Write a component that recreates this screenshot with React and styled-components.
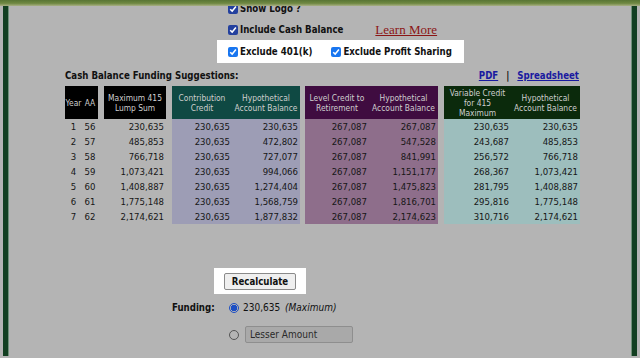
import React from 'react';
import styled, { createGlobalStyle } from 'styled-components';

const GlobalStyle = createGlobalStyle`
  html, body {
    margin: 0;
    padding: 0;
    background: #b4b4b4;
    overflow: hidden;
  }
  body {
    font-family: "DejaVu Sans Condensed", "DejaVu Sans", sans-serif;
    color: #111;
  }
`;

const TopStrip = styled.div`
  position: fixed;
  top: 0;
  left: 0;
  right: 0;
  height: 6px;
  background: linear-gradient(#587534, #6f8842 55%, #a9b085);
  z-index: 2;
`;

const Frame = styled.div`
  margin-left: 3px;
  width: 624px;
  height: 358px;
  border-left: 5px solid #123f21;
  border-right: 5px solid #123f21;
  box-shadow: inset 1px 0 0 #6f8f78, inset -1px 0 0 #6f8f78;
`;

const Content = styled.div`
  margin-top: -2px;
  padding-left: 57px;
  width: 516px;
`;

const OptionRow = styled.div`
  display: flex;
  align-items: center;
  height: 21px;
  margin-left: 163px;
`;

const Spotlight = styled.div`
  display: flex;
  align-items: center;
  gap: 19px;
  background: #fff;
  height: 23px;
  width: 247px;
  box-sizing: border-box;
  padding-left: 11px;
  margin-left: 152px;
`;

const Check = styled.label`
  display: flex;
  align-items: center;
  gap: 2px;
  font-size: 9.6px;
  font-weight: bold;
  white-space: nowrap;
  color: #111;
`;

const Box = styled.span`
  width: 10px;
  height: 10px;
  border-radius: 2px;
  background: ${p => (p.$bright ? '#1976f0' : '#23409e')};
  display: inline-flex;
  align-items: center;
  justify-content: center;
`;

const LearnMore = styled.a`
  margin-left: 32px;
  font-family: "Liberation Serif", serif;
  font-size: 13px;
  color: #8b1515;
  text-decoration: underline;
`;

const TitleRow = styled.div`
  display: flex;
  justify-content: space-between;
  align-items: center;
  height: 21px;
  margin-top: 2px;
`;

const Title = styled.div`
  font-size: 9.6px;
  font-weight: bold;
`;

const Links = styled.div`
  display: flex;
  gap: 8px;
  font-size: 9.6px;
  font-weight: bold;
  margin-right: 2px;
  a { color: #1a1aa0; text-decoration: underline; }
`;

const Table = styled.table`
  border-collapse: collapse;
  table-layout: fixed;
  width: 515px;
  font-size: 9.5px;
`;

const headBg = { black: '#000', teal: '#0f4943', plum: '#3f0c40', green: '#0b2a0c' };
const bodyBg = { teal: '#9d9db5', plum: '#8e6e8b', green: '#9dbebd' };

const Th = styled.th`
  height: 33px;
  padding: 0;
  font-weight: normal;
  font-size: 8.4px;
  line-height: 10px;
  white-space: nowrap;
  color: #cfcfcf;
  text-align: center;
  background: ${p => (p.$g ? headBg[p.$g] : 'transparent')};
`;

const Td = styled.td`
  height: 15px;
  padding: 0 ${p => (p.$center ? 0 : 2)}px 0 0;
  text-align: ${p => (p.$center ? 'center' : 'right')};
  color: #161616;
  white-space: nowrap;
  background: ${p => (p.$g ? bodyBg[p.$g] : 'transparent')};
`;

const RecalcBox = styled.div`
  margin: 44px 0 0 149px;
  width: 92px;
  height: 26px;
  background: #fff;
  display: flex;
  align-items: center;
  justify-content: center;
`;

const Button = styled.button`
  width: 72px;
  height: 17px;
  padding: 0;
  font-family: inherit;
  font-size: 9.6px;
  font-weight: bold;
  color: #111;
  background: #efefef;
  border: 1px solid #8a8a8a;
  border-radius: 2px;
`;

const FundGrid = styled.div`
  display: grid;
  grid-template-columns: 57px auto;
  align-items: center;
  row-gap: 6px;
  margin: 3px 0 0 107px;
  font-size: 10px;
`;

const FundLabel = styled.div`
  font-weight: bold;
  font-size: 9.6px;
  height: 21px;
  line-height: 21px;
`;

const RadioRow = styled.div`
  display: flex;
  align-items: center;
  gap: 4px;
  height: 21px;
  i { margin-left: 2px; }
`;

const Radio = styled.span`
  width: 10px;
  height: 10px;
  border-radius: 50%;
  box-sizing: border-box;
  border: 1px solid ${p => (p.$on ? '#1d4fc4' : '#555')};
  background: ${p => (p.$on ? 'radial-gradient(#1d4fc4 0 3px, #b4b4b4 3.5px)' : 'transparent')};
`;

const Amount = styled.input`
  width: 108px;
  height: 17px;
  box-sizing: border-box;
  margin-left: 2px;
  padding: 0 4px;
  font-family: inherit;
  font-size: 10px;
  background: #a9a9a9;
  border: 1px solid #8e8e8e;
  border-radius: 2px;
  &::placeholder { color: #2a2a2a; }
`;

const Tick = () => (
  <svg width="8" height="8" viewBox="0 0 8 8">
    <path d="M1.2 4.2 L3.2 6.1 L6.9 1.6" stroke="#fff" strokeWidth="1.5" fill="none" />
  </svg>
);

const CheckItem = ({ label, bright }) => (
  <Check>
    <Box $bright={bright}><Tick /></Box>
    {label}
  </Check>
);

const rows = [
  ['1', '56', '230,635', '230,635', '230,635', '267,087', '267,087', '230,635', '230,635'],
  ['2', '57', '485,853', '230,635', '472,802', '267,087', '547,528', '243,687', '485,853'],
  ['3', '58', '766,718', '230,635', '727,077', '267,087', '841,991', '256,572', '766,718'],
  ['4', '59', '1,073,421', '230,635', '994,066', '267,087', '1,151,177', '268,367', '1,073,421'],
  ['5', '60', '1,408,887', '230,635', '1,274,404', '267,087', '1,475,823', '281,795', '1,408,887'],
  ['6', '61', '1,775,148', '230,635', '1,568,759', '267,087', '1,816,701', '295,816', '1,775,148'],
  ['7', '62', '2,174,621', '230,635', '1,877,832', '267,087', '2,174,623', '310,716', '2,174,621'],
];

const widths = [17, 16, 6, 62, 6, 60, 68, 5, 64, 69, 6, 67, 69];

const App = () => (
  <>
    <GlobalStyle />
    <TopStrip />
    <Frame>
      <Content>
        <OptionRow>
          <CheckItem label="Show Logo ?" />
        </OptionRow>
        <OptionRow>
          <CheckItem label="Include Cash Balance" />
          <LearnMore href="#">Learn More</LearnMore>
        </OptionRow>
        <Spotlight>
          <CheckItem bright label="Exclude 401(k)" />
          <CheckItem bright label="Exclude Profit Sharing" />
        </Spotlight>

        <TitleRow>
          <Title>Cash Balance Funding Suggestions:</Title>
          <Links>
            <a href="#">PDF</a>
            <span>|</span>
            <a href="#">Spreadsheet</a>
          </Links>
        </TitleRow>

        <Table>
          <colgroup>
            {widths.map((w, i) => <col key={i} style={{ width: w }} />)}
          </colgroup>
          <thead>
            <tr>
              <Th $g="black">Year</Th>
              <Th $g="black">AA</Th>
              <Th />
              <Th $g="black">Maximum 415<br />Lump Sum</Th>
              <Th />
              <Th $g="teal">Contribution<br />Credit</Th>
              <Th $g="teal">Hypothetical<br />Account Balance</Th>
              <Th />
              <Th $g="plum">Level Credit to<br />Retirement</Th>
              <Th $g="plum">Hypothetical<br />Account Balance</Th>
              <Th />
              <Th $g="green">Variable Credit<br />for 415<br />Maximum</Th>
              <Th $g="green">Hypothetical<br />Account Balance</Th>
            </tr>
          </thead>
          <tbody>
            {rows.map(r => (
              <tr key={r[0]}>
                <Td $center>{r[0]}</Td>
                <Td $center>{r[1]}</Td>
                <Td />
                <Td>{r[2]}</Td>
                <Td />
                <Td $g="teal">{r[3]}</Td>
                <Td $g="teal">{r[4]}</Td>
                <Td />
                <Td $g="plum">{r[5]}</Td>
                <Td $g="plum">{r[6]}</Td>
                <Td />
                <Td $g="green">{r[7]}</Td>
                <Td $g="green">{r[8]}</Td>
              </tr>
            ))}
          </tbody>
        </Table>

        <RecalcBox>
          <Button type="button">Recalculate</Button>
        </RecalcBox>

        <FundGrid>
          <FundLabel>Funding:</FundLabel>
          <RadioRow>
            <Radio $on />
            <span>230,635 <i>(Maximum)</i></span>
          </RadioRow>
          <div />
          <RadioRow>
            <Radio />
            <Amount placeholder="Lesser Amount" />
          </RadioRow>
        </FundGrid>
      </Content>
    </Frame>
  </>
);

export default App;
